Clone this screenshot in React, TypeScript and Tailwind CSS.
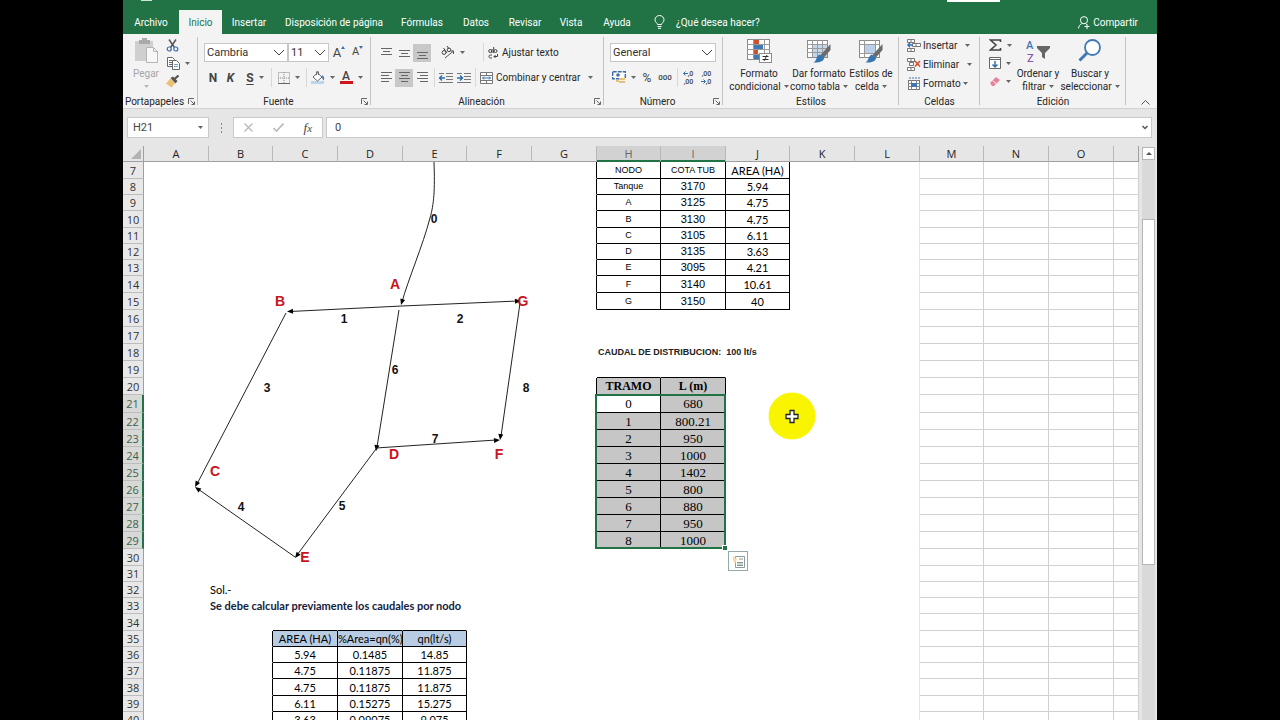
import type { ReactNode } from "react";
import clsx from "clsx";

const UI = "font-['Roboto','Noto_Sans',sans-serif]";

/* ---------- small shared pieces ---------- */

function Arrow() {
  return (
    <svg width="5" height="3" viewBox="0 0 5 3" className="shrink-0" aria-hidden="true">
      <path d="M0 0h5L2.5 3z" fill="#666" />
    </svg>
  );
}

function Chevron() {
  return (
    <svg width="12" height="8" viewBox="0 0 12 8" className="pointer-events-none absolute right-[2px] top-[5px]" aria-hidden="true">
      <path d="M1 1l5 5 5-5" fill="none" stroke="#444" strokeWidth="1" />
    </svg>
  );
}

function Tool({ label, width, active, children }: { label: string; width: string; active?: boolean; children: ReactNode }) {
  return (
    <button
      type="button"
      aria-label={label}
      className={clsx("flex h-[18px] shrink-0 items-center justify-center gap-[5px] text-[#444]", width, active && "bg-[#c8c8c8]")}
    >
      {children}
    </button>
  );
}

function Sep() {
  return <span className="h-[19px] w-px shrink-0 bg-[#d8d8d8]" />;
}

function Launcher() {
  return (
    <button type="button" aria-label="Más opciones" className="absolute bottom-[3px] right-[3px]">
      <svg width="7" height="7" viewBox="0 0 7 7" aria-hidden="true">
        <path d="M.5 6V.5H6M2.5 2.5l3.5 3.5M6.5 3.5v3h-3" fill="none" stroke="#666" />
      </svg>
    </button>
  );
}

function Group({ name, width, launcher, children }: { name: string; width: string; launcher?: boolean; children: ReactNode }) {
  return (
    <section aria-label={name} className={clsx("relative flex shrink-0 flex-col", width)}>
      <div className="flex-1">{children}</div>
      <div className={clsx("h-[13px] text-center text-[10px] leading-[13px] text-[#262626]", launcher && "pr-[12px]")}>{name}</div>
      {launcher && <Launcher />}
      <span className="absolute bottom-[3px] right-0 top-[3px] w-px bg-[#c3c3c3]" />
    </section>
  );
}

function Picker({ label, value, width }: { label: string; value: string; width: string }) {
  return (
    <div className={clsx("relative h-[19px] shrink-0 border border-[#c6c6c6] bg-white", width)}>
      <select aria-label={label} defaultValue={value} className="block h-full w-full appearance-none bg-transparent pl-[2px] text-[11px] leading-[17px] text-[#333] outline-none">
        <option>{value}</option>
      </select>
      <Chevron />
    </div>
  );
}

function BigButton({ width, lines, muted, arrowBelow, children }: { width: string; lines: string[]; muted?: boolean; arrowBelow?: boolean; children: ReactNode }) {
  return (
    <button type="button" className={clsx("flex shrink-0 flex-col items-center pt-[4px] text-[10px] leading-[13px]", width, muted ? "text-[#a6a6a6]" : "text-[#262626]")}>
      {children}
      {lines.map((line, i) => (
        <span key={line} className="flex items-center gap-[3px] whitespace-nowrap">
          {line}
          {!arrowBelow && i === lines.length - 1 && <Arrow />}
        </span>
      ))}
      {arrowBelow && (
        <span className="pt-[5px] opacity-40">
          <Arrow />
        </span>
      )}
    </button>
  );
}

/* ---------- icons ---------- */

function AlignIcon({ rows }: { rows: [number, number, number][] }) {
  return (
    <svg width="13" height="13" viewBox="0 0 13 13" aria-hidden="true">
      {rows.map(([x, y, w]) => (
        <path key={y} d={`M${x} ${y + 0.5}h${w}`} stroke="#666" />
      ))}
    </svg>
  );
}

function IndentIcon({ flip }: { flip?: boolean }) {
  return (
    <svg width="14" height="12" viewBox="0 0 14 12" aria-hidden="true">
      <path d="M0 1.5h5M7 1.5h7M7 4.5h7M7 7.5h7M0 10.5h14" stroke="#777" />
      <path d={flip ? "M0 6h5M3 3.5L5.6 6 3 8.5" : "M6 6H1M3 3.5L.4 6 3 8.5"} stroke="#2f6fad" strokeWidth="1.4" fill="none" />
    </svg>
  );
}

function GridBrush({ shade }: { shade: "table" | "cell" }) {
  return (
    <svg width="26" height="26" viewBox="0 0 26 26" className="mb-[3px]" aria-hidden="true">
      <rect x="1.5" y="2.5" width="20" height="17" fill="#fff" stroke="#8a8a8a" />
      {shade === "table" ? <rect x="6" y="7" width="15" height="12" fill="#c3d6ea" /> : <rect x="6" y="7" width="11" height="8" fill="#b9d0e8" />}
      <path d={shade === "table" ? "M1 6.5h21M1 10.5h21M1 14.5h21M6.5 2v18M11.5 2v18M16.5 2v18" : "M1 6.5h21M1 15.5h21M6.5 2v18M17.5 2v18"} stroke="#9a9a9a" />
      <path d="M24.5 6v6l-7 8-3-3z" fill="#6b6b6b" />
      <path d="M14 16.5l4 3.5c0 3-4 5-11 4.500 4-1 3-7 7-8z" fill="#3577b5" />
    </svg>
  );
}

function ConditionalIcon() {
  return (
    <svg width="26" height="26" viewBox="0 0 26 26" className="mb-[3px]" aria-hidden="true">
      <rect x="1.5" y="1.5" width="22" height="20" fill="#fff" stroke="#8a8a8a" />
      <rect x="8" y="2" width="5" height="4" fill="#d0502f" />
      <rect x="8" y="7" width="9" height="4" fill="#3f78b5" />
      <rect x="8" y="12" width="4" height="4" fill="#d0502f" />
      <rect x="8" y="17" width="5" height="4" fill="#3f78b5" />
      <path d="M1 6.5h23M1 11.5h23M1 16.5h23M7.5 1v21M18.5 1v21" stroke="#9a9a9a" />
      <rect x="13.5" y="15.5" width="12" height="9" fill="#fff" stroke="#8a8a8a" />
      <path d="M16.5 18.5h6M16.5 21.5h6M21 17l-3 6" stroke="#333" />
    </svg>
  );
}

function PasteIcon() {
  return (
    <svg width="26" height="26" viewBox="0 0 26 26" className="mb-[3px]" aria-hidden="true">
      <path d="M2 3h18v20H2z" fill="#cfcfcf" />
      <path d="M6 2h3V0h5v2h3v4H6z" fill="#a9a9a9" />
      <path d="M13.5 9.5h7l4 4v11h-11z" fill="#f7f7f7" stroke="#b5b5b5" />
      <path d="M20.5 9.5v4h4" fill="none" stroke="#b5b5b5" />
    </svg>
  );
}

function ScissorsIcon() {
  return (
    <svg width="13" height="13" viewBox="0 0 13 13" aria-hidden="true">
      <path d="M3 .5l5.500 8M10 .5l-5.500 8" stroke="#555" strokeWidth="1.5" />
      <circle cx="3.2" cy="10" r="2" fill="none" stroke="#3c6fa6" strokeWidth="1.2" />
      <circle cx="9.8" cy="10" r="2" fill="none" stroke="#3c6fa6" strokeWidth="1.2" />
    </svg>
  );
}

function CopyIcon() {
  return (
    <svg width="13" height="13" viewBox="0 0 13 13" aria-hidden="true">
      <path d="M.5.5h5l2 2v7h-7zM2 3.500h3M2 5.500h3M2 7.500h3" fill="#fff" stroke="#666" />
      <path d="M5.500 3.500h4l3 3v6h-7z" fill="#fff" stroke="#666" />
      <path d="M7 7.500h4M7 9.500h4" stroke="#7a98ba" />
    </svg>
  );
}

function BrushIcon() {
  return (
    <svg width="13" height="13" viewBox="0 0 13 13" aria-hidden="true">
      <path d="M4.500 3.500L9 8l-3.500 4.500L0 8.500z" fill="#ecc06f" />
      <path d="M4.500 3l2.500-1.500L11.500 6l-2 2.500z" fill="#555" />
      <path d="M8.500 4L12.500.5" stroke="#555" strokeWidth="2.200" />
    </svg>
  );
}

function CellsIcon({ kind }: { kind: "insert" | "delete" | "format" }) {
  return (
    <svg width="14" height="13" viewBox="0 0 14 13" className="shrink-0" aria-hidden="true">
      {kind === "format" ? (
        <>
          <rect x="1.5" y="3.5" width="11" height="9" fill="#fff" stroke="#777" />
          <path d="M1 6.500h12M1 9.500h12M4.500 3v10M9.500 3v10" stroke="#888" />
          <rect x="4" y="6" width="6" height="4" fill="#3f78b5" />
          <path d="M2 1h11" stroke="#3f78b5" strokeDasharray="2 1" />
        </>
      ) : (
        <>
          <path d="M.5.5h7v3h-7zM4 .5v3M.5 9.500h7v3h-7zM4 9.500v3" fill="#fff" stroke="#777" />
          <path d={kind === "insert" ? "M5.500 4.500h8v3h-8zM9 4.500v3" : "M2.500 4.500h4v3h-4z"} fill="#fff" stroke="#777" />
          {kind === "insert" ? (
            <path d="M6 6H1M3 3.800L.8 6 3 8.200" fill="none" stroke="#2f6fad" strokeWidth="1.300" />
          ) : (
            <path d="M8 3l5 5.500M13 3L8 8.500" stroke="#d9482b" strokeWidth="1.500" />
          )}
        </>
      )}
    </svg>
  );
}

/* ---------- header ---------- */

const tabs = [
  { name: "Archivo", width: "w-[56px]" },
  { name: "Inicio", width: "w-[43px]" },
  { name: "Insertar", width: "w-[54px]" },
  { name: "Disposición de página", width: "w-[116px]" },
  { name: "Fórmulas", width: "w-[60px]" },
  { name: "Datos", width: "w-[48px]" },
  { name: "Revisar", width: "w-[50px]" },
  { name: "Vista", width: "w-[42px]" },
  { name: "Ayuda", width: "w-[50px]" },
];

function Header() {
  return (
    <header className="shrink-0 bg-[#217346] text-white">
      <div className="flex h-[10px] items-start">
        <span className="ml-[18px] h-px w-[11px] bg-white/80" />
        <span className="ml-auto mr-[157px] h-[2px] w-[53px] bg-white" />
      </div>
      <div className="flex h-[24px] items-stretch text-[10px]">
        <nav className="flex" aria-label="Cinta">
          {tabs.map((t) => (
            <button
              key={t.name}
              type="button"
              className={clsx("whitespace-nowrap", t.width, t.name === "Inicio" ? "bg-[#f3f3f3] text-[#217346]" : "text-white")}
            >
              {t.name}
            </button>
          ))}
        </nav>
        <button type="button" className="ml-[12px] flex items-center gap-[11px] whitespace-nowrap">
          <svg width="11" height="14" viewBox="0 0 11 14" aria-hidden="true">
            <path d="M3.500 9.500C3.500 8 1 7.500 1 4.800a4.500 4.300 0 0 1 9 0c0 2.700-2.500 3.200-2.500 4.700zM3.500 11.500h4M4 13.300h3" fill="none" stroke="#fff" />
          </svg>
          ¿Qué desea hacer?
        </button>
        <button type="button" className="ml-auto mr-[19px] flex items-center gap-[3px]">
          <svg width="12" height="13" viewBox="0 0 12 13" aria-hidden="true">
            <circle cx="6" cy="4.2" r="3.6" fill="none" stroke="#fff" />
            <path d="M.6 12.500c0-2.500 1.400-4 3.200-4.800M7.500 7.500L8.500 8.500M9 8v5M6.500 10.500h5" fill="none" stroke="#fff" />
          </svg>
          Compartir
        </button>
      </div>
    </header>
  );
}

function Ribbon() {
  return (
    <div className="flex h-[75px] shrink-0 border-b border-[#d2d2d2] bg-[#f3f3f3]">
      <Group name="Portapapeles" width="w-[75px]" launcher>
        <div className="flex pl-[3px]">
          <BigButton width="w-[40px]" lines={["Pegar"]} muted arrowBelow>
            <PasteIcon />
          </BigButton>
          <div className="flex flex-col pt-[2px]">
            <Tool label="Cortar" width="w-[13px]"><ScissorsIcon /></Tool>
            <Tool label="Copiar" width="w-[24px]"><CopyIcon /><Arrow /></Tool>
            <Tool label="Copiar formato" width="w-[13px]"><BrushIcon /></Tool>
          </div>
        </div>
      </Group>

      <Group name="Fuente" width="w-[173px]" launcher>
        <div className="flex items-center pl-[6px] pt-[9px]">
          <Picker label="Fuente" value="Cambria" width="w-[84px]" />
          <Picker label="Tamaño de fuente" value="11" width="w-[41px]" />
          <Tool label="Aumentar tamaño" width="w-[20px]">
            <span className="flex items-start text-[13px]">A<svg width="4" height="3" viewBox="0 0 4 3" className="mt-[3px]"><path d="M0 3h4L2 0z" fill="#3f6ea5" /></svg></span>
          </Tool>
          <Tool label="Disminuir tamaño" width="w-[17px]">
            <span className="flex items-start text-[11px]">A<svg width="4" height="3" viewBox="0 0 4 3" className="mt-[2px]"><path d="M0 0h4L2 3z" fill="#3f6ea5" /></svg></span>
          </Tool>
        </div>
        <div className="flex items-center pl-[6px] pt-[6px] text-[12px]">
          <Tool label="Negrita" width="w-[18px]"><b>N</b></Tool>
          <Tool label="Cursiva" width="w-[17px]"><b className="italic">K</b></Tool>
          <Tool label="Subrayado" width="w-[32px]"><b className="underline underline-offset-2">S</b><Arrow /></Tool>
          <Sep />
          <Tool label="Bordes" width="w-[34px]">
            <svg width="12" height="12" viewBox="0 0 12 12" aria-hidden="true">
              <path d="M.5.5h11v11H.5zM6 0v12M0 6h12" fill="none" stroke="#888" strokeDasharray="1 1" />
              <path d="M0 11.500h12" stroke="#666" />
            </svg>
            <Arrow />
          </Tool>
          <Sep />
          <Tool label="Color de relleno" width="w-[31px]">
            <svg width="14" height="13" viewBox="0 0 14 13" aria-hidden="true">
              <path d="M0 10h13v3H0z" fill="#bcd6ec" />
              <path d="M2 6l4.500-4L11 6l-4.500 4z" fill="#fff" stroke="#666" />
              <path d="M5.500 4V.8h2V4" fill="none" stroke="#666" />
              <path d="M11.500 4c2 2 2 4 1 5.500-1-1.500-2-3.500-1-5.500z" fill="#3f6ea5" />
            </svg>
            <Arrow />
          </Tool>
          <Tool label="Color de fuente" width="w-[26px]">
            <span className="flex h-[13px] w-[13px] justify-center border-b-[3px] border-[#d0141c] text-[12px] font-medium leading-[10px]">A</span>
            <Arrow />
          </Tool>
        </div>
      </Group>

      <Group name="Alineación" width="w-[233px]" launcher>
        <div className="flex items-center pl-[6px] pt-[9px]">
          <Tool label="Alinear arriba" width="w-[18px]"><AlignIcon rows={[[1, 2, 11], [3, 5, 7], [1, 8, 11]]} /></Tool>
          <Tool label="Alinear en medio" width="w-[18px]"><AlignIcon rows={[[1, 4, 11], [3, 7, 7], [1, 10, 11]]} /></Tool>
          <Tool label="Alinear abajo" width="w-[18px]" active><AlignIcon rows={[[1, 6, 11], [3, 9, 7], [1, 12, 11]]} /></Tool>
          <Tool label="Orientación" width="w-[43px]">
            <svg width="14" height="13" viewBox="0 0 14 13" aria-hidden="true">
              <circle cx="3" cy="6.5" r="1.9" fill="none" stroke="#444" />
              <path d="M2.500 2l3.500 5" stroke="#444" />
              <circle cx="8" cy="3.8" r="1.8" fill="none" stroke="#444" />
              <path d="M6 0l2 3" stroke="#444" />
              <path d="M4 12l8.500-7M9.500 5h3v3" fill="none" stroke="#555" />
            </svg>
            <Arrow />
          </Tool>
          <span className="w-[9px]" />
          <Sep />
          <button type="button" className="flex items-center gap-[4px] whitespace-nowrap pl-[4px] text-[10px] text-[#262626]">
            <svg width="10" height="12" viewBox="0 0 10 12" aria-hidden="true">
              <circle cx="2.2" cy="4" r="1.5" fill="none" stroke="#444" />
              <path d="M4 2v4M5.700 0v6M4 8H2.500a1.500 1.500 0 0 0 0 3H4M9.500 7v2.500H6M7.500 8L6 9.500 7.500 11" fill="none" stroke="#444" />
              <circle cx="7.5" cy="4" r="1.5" fill="none" stroke="#444" />
            </svg>
            Ajustar texto
          </button>
        </div>
        <div className="flex items-center pl-[6px] pt-[6px]">
          <Tool label="Alinear a la izquierda" width="w-[18px]"><AlignIcon rows={[[1, 1, 11], [1, 4, 8], [1, 7, 11], [1, 10, 8]]} /></Tool>
          <Tool label="Centrar" width="w-[18px]" active><AlignIcon rows={[[1, 1, 11], [3, 4, 7], [1, 7, 11], [3, 10, 7]]} /></Tool>
          <Tool label="Alinear a la derecha" width="w-[18px]"><AlignIcon rows={[[1, 1, 11], [4, 4, 8], [1, 7, 11], [4, 10, 8]]} /></Tool>
          <span className="w-[3px]" />
          <Sep />
          <span className="w-[2px]" />
          <Tool label="Disminuir sangría" width="w-[18px]"><IndentIcon /></Tool>
          <Tool label="Aumentar sangría" width="w-[18px]"><IndentIcon flip /></Tool>
          <span className="w-[2px]" />
          <Sep />
          <button type="button" className="flex items-center gap-[3px] whitespace-nowrap pl-[4px] text-[10px] text-[#262626]">
            <svg width="13" height="12" viewBox="0 0 13 12" aria-hidden="true">
              <path d="M.5.5h12v11H.5zM.5 3.500h12M.5 8.500h12M6.500.5v3M6.500 8.500v3" fill="#fff" stroke="#777" />
              <path d="M2.500 6h8M4 4.500L2.500 6 4 7.500M9 4.500L10.500 6 9 7.500" fill="none" stroke="#2f6fad" />
            </svg>
            Combinar y centrar
            <span className="pl-[5px]"><Arrow /></span>
          </button>
        </div>
      </Group>

      <Group name="Número" width="w-[119px]" launcher>
        <div className="flex items-center pl-[6px] pt-[9px]">
          <Picker label="Formato de número" value="General" width="w-[106px]" />
        </div>
        <div className="flex items-center pl-[6px] pt-[6px]">
          <Tool label="Formato contable" width="w-[28px]">
            <svg width="14" height="13" viewBox="0 0 14 13" aria-hidden="true">
              <rect x=".7" y=".7" width="12.6" height="7" fill="#fff" stroke="#3f6ea5" strokeWidth="1.4" strokeDasharray="4 1" />
              <circle cx="6" cy="4" r="1.8" fill="#3f6ea5" />
              <path d="M7 7h6v2H7zM7 10h6v2H7zM4 9h3v2H4z" fill="#e6c277" />
            </svg>
            <Arrow />
          </Tool>
          <Tool label="Estilo porcentual" width="w-[18px]"><span className="text-[12px]">%</span></Tool>
          <Tool label="Estilo millares" width="w-[18px]"><span className="text-[8px] font-medium">000</span></Tool>
          <span className="w-[3px]" />
          <Sep />
          <Tool label="Aumentar decimales" width="w-[20px]">
            <span className="flex flex-col items-end text-[7px] font-medium leading-[8px]">
              <span className="flex items-center"><svg width="5" height="5" viewBox="0 0 5 5"><path d="M5 2.500H1M2.500.5L.5 2.500l2 2" fill="none" stroke="#2f6fad" /></svg>,0</span>
              <span>,00</span>
            </span>
          </Tool>
          <Tool label="Disminuir decimales" width="w-[16px]">
            <span className="flex flex-col items-end text-[7px] font-medium leading-[8px]">
              <span>,00</span>
              <span className="flex items-center"><svg width="5" height="5" viewBox="0 0 5 5"><path d="M0 2.500h4M2.500.5l2 2-2 2" fill="none" stroke="#2f6fad" /></svg>,0</span>
            </span>
          </Tool>
        </div>
      </Group>

      <Group name="Estilos" width="w-[176px]">
        <div className="flex pl-[6px]">
          <BigButton width="w-[60px]" lines={["Formato", "condicional"]}><ConditionalIcon /></BigButton>
          <BigButton width="w-[60px]" lines={["Dar formato", "como tabla"]}><GridBrush shade="table" /></BigButton>
          <BigButton width="w-[44px]" lines={["Estilos de", "celda"]}><GridBrush shade="cell" /></BigButton>
        </div>
      </Group>

      <Group name="Celdas" width="w-[81px]">
        <div className="flex flex-col pl-[8px] pt-[2px] text-[10px] text-[#262626]">
          <button type="button" className="flex h-[19px] items-center gap-[2px]"><CellsIcon kind="insert" />Insertar<span className="pl-[6px]"><Arrow /></span></button>
          <button type="button" className="flex h-[19px] items-center gap-[2px]"><CellsIcon kind="delete" />Eliminar<span className="pl-[6px]"><Arrow /></span></button>
          <button type="button" className="flex h-[19px] items-center gap-[2px]"><CellsIcon kind="format" />Formato<Arrow /></button>
        </div>
      </Group>

      <Group name="Edición" width="w-[146px]">
        <div className="flex pl-[6px]">
          <div className="flex w-[30px] flex-col pt-[2px]">
            <Tool label="Autosuma" width="w-[28px]">
              <svg width="13" height="12" viewBox="0 0 13 12" aria-hidden="true"><path d="M11.500 3V1h-10L7 6l-5.500 5h10V9" fill="none" stroke="#444" strokeWidth="1.600" /></svg>
              <Arrow />
            </Tool>
            <Tool label="Rellenar" width="w-[28px]">
              <svg width="12" height="12" viewBox="0 0 12 12" aria-hidden="true"><path d="M.5.5h11v11H.5zM.5 2.500h11" fill="#fff" stroke="#666" /><path d="M6 4v6M3.500 7.500L6 10l2.500-2.500" fill="none" stroke="#2f6fad" strokeWidth="1.500" /></svg>
              <Arrow />
            </Tool>
            <Tool label="Borrar" width="w-[28px]">
              <svg width="12" height="12" viewBox="0 0 12 12" aria-hidden="true"><path d="M1 8l6-6 4 3-6 6H3z" fill="#e5819a" /><path d="M3.500 5.500l4 3.500" stroke="#fff" /></svg>
              <Arrow />
            </Tool>
          </div>
          <BigButton width="w-[44px]" lines={["Ordenar y", "filtrar"]}>
            <svg width="26" height="26" viewBox="0 0 26 26" className="mb-[3px]" aria-hidden="true">
              <text x="1" y="11" fontSize="11" fontWeight="500" fill="#3f78b5">A</text>
              <text x="2" y="24" fontSize="11" fontWeight="500" fill="#8a55b0">Z</text>
              <path d="M12 8h13v2l-5 5v6l-3-2v-4l-5-5z" fill="#666" />
            </svg>
          </BigButton>
          <BigButton width="w-[60px]" lines={["Buscar y", "seleccionar"]}>
            <svg width="26" height="26" viewBox="0 0 26 26" className="mb-[3px]" aria-hidden="true">
              <circle cx="15.5" cy="9.5" r="7.5" fill="#fff" stroke="#3f78b5" strokeWidth="1.8" />
              <path d="M10 15l-7.500 7.500" stroke="#3f78b5" strokeWidth="3" />
            </svg>
          </BigButton>
        </div>
      </Group>
      <button type="button" aria-label="Contraer la cinta" className="ml-auto mr-[7px] mt-auto pb-[3px]">
        <svg width="9" height="5" viewBox="0 0 9 5" aria-hidden="true"><path d="M.5 4.500l4-4 4 4" fill="none" stroke="#555" /></svg>
      </button>
    </div>
  );
}

function FormulaBar() {
  return (
    <div className="flex shrink-0 items-center bg-[#e6e6e6] pl-[4px] pr-[5px] pt-[8px] text-[#444]">
      <div className="relative h-[21px] w-[82px] shrink-0 border border-[#c9c9c9] bg-white">
        <input aria-label="Cuadro de nombres" defaultValue="H21" className="block h-full w-full bg-transparent pl-[5px] text-[11px] outline-none" />
        <span className="absolute right-[5px] top-[8px]"><Arrow /></span>
      </div>
      <span className="flex w-[24px] shrink-0 flex-col items-center gap-[2px]">
        <i className="h-[2px] w-px bg-[#888]" /><i className="h-[2px] w-px bg-[#888]" /><i className="h-[2px] w-px bg-[#888]" />
      </span>
      <div className="flex h-[21px] w-[90px] shrink-0 items-center justify-around border border-[#c9c9c9] bg-white">
        <button type="button" aria-label="Cancelar"><svg width="9" height="9" viewBox="0 0 9 9"><path d="M.5.5l8 8M8.500.5l-8 8" stroke="#b8b8b8" strokeWidth="1.300" /></svg></button>
        <button type="button" aria-label="Introducir"><svg width="11" height="9" viewBox="0 0 11 9"><path d="M.5 5l3 3 7-7.500" fill="none" stroke="#b8b8b8" strokeWidth="1.600" /></svg></button>
        <button type="button" aria-label="Insertar función" className="font-['Liberation_Serif',serif] text-[13px] italic leading-[15px]">f<span className="text-[11px]">x</span></button>
      </div>
      <div className="relative ml-[3px] h-[21px] flex-1 border border-[#c9c9c9] bg-white">
        <input aria-label="Barra de fórmulas" defaultValue="0" className="block h-full w-full bg-transparent pl-[8px] text-[11px] outline-none" />
        <svg width="6" height="5" viewBox="0 0 6 5" className="absolute right-[3px] top-[7px]" aria-hidden="true"><path d="M.5 1L3 3.500 5.500 1" fill="none" stroke="#555" strokeWidth="1.500" /></svg>
      </div>
    </div>
  );
}

/* ---------- worksheet ---------- */

const columns = [
  { id: "A", w: "w-[65px]" },
  { id: "B", w: "w-[64px]" },
  { id: "C", w: "w-[65px]" },
  { id: "D", w: "w-[65px]" },
  { id: "E", w: "w-[64px]" },
  { id: "F", w: "w-[65px]" },
  { id: "G", w: "w-[65px]" },
  { id: "H", w: "w-[64px]" },
  { id: "I", w: "w-[65px]" },
  { id: "J", w: "w-[64px]" },
  { id: "K", w: "w-[65px]" },
  { id: "L", w: "w-[65px]" },
  { id: "M", w: "w-[64px]" },
  { id: "N", w: "w-[65px]" },
  { id: "O", w: "w-[65px]" },
  { id: "", w: "w-auto" },
];

const tallRows = new Set([7, 10, 14, 15, 16, 17, 18, 19, 20, 22, 23, 24, 25, 26, 27, 28, 29, 30, 34, 38]);
const rowNumbers = Array.from({ length: 34 }, (_, i) => i + 7);

const blocks = [
  { c0: 7, r0: 7, data: [["NODO", "COTA TUB", "AREA (HA)"], ["Tanque", "3170", "5.94"], ["A", "3125", "4.75"], ["B", "3130", "4.75"], ["C", "3105", "6.11"], ["D", "3135", "3.63"], ["E", "3095", "4.21"], ["F", "3140", "10.61"], ["G", "3150", "40"]] },
  { c0: 7, r0: 20, data: [["TRAMO", "L (m)"], ["0", "680"], ["1", "800.21"], ["2", "950"], ["3", "1000"], ["4", "1402"], ["5", "800"], ["6", "880"], ["7", "950"], ["8", "1000"]] },
  { c0: 2, r0: 35, data: [["AREA (HA)", "%Area=qn(%)", "qn(lt/s)"], ["5.94", "0.1485", "14.85"], ["4.75", "0.11875", "11.875"], ["4.75", "0.11875", "11.875"], ["6.11", "0.15275", "15.275"], ["3.63", "0.09075", "9.075"]] },
];

function blockAt(r: number, c: number) {
  return blocks.findIndex((b) => r >= b.r0 && r < b.r0 + b.data.length && c >= b.c0 && c < b.c0 + b.data[0].length);
}

function cellLook(block: number, r: number, c: number) {
  if (block === 0) {
    if (c === 9) return "font-['Lato',sans-serif] text-[11px]";
    if (c === 7 || r === 7) return "font-['Liberation_Sans',sans-serif] text-[9px]";
    return "font-['Liberation_Sans',sans-serif] text-[11px]";
  }
  if (block === 1) {
    if (r === 20) return "bg-[#c6c6c6] font-['Liberation_Serif',serif] text-[12px] font-bold";
    return clsx("font-['Liberation_Serif',serif] text-[13px]", !(r === 21 && c === 7) && "bg-[#c6c6c6]");
  }
  return clsx("font-['Lato',sans-serif] text-[11px]", r === 35 && "bg-[#b8cce4]");
}

const notes: Record<string, { span: number; text: string; look: string }> = {
  "18-7": { span: 3, text: "CAUDAL DE DISTRIBUCION:  100 lt/s", look: "font-['Liberation_Sans',sans-serif] text-[9px] font-bold text-[#222]" },
  "32-1": { span: 2, text: "Sol.-", look: "font-['Lato',sans-serif] text-[11px]" },
  "33-1": { span: 5, text: "Se debe calcular previamente los caudales por nodo", look: "font-['Lato',sans-serif] text-[11px] font-bold text-[#14213d]" },
};

function SheetRow({ r }: { r: number }) {
  const selected = r >= 21 && r <= 29;
  const cells: ReactNode[] = [];
  for (let c = 0; c < columns.length; c++) {
    const note = notes[`${r}-${c}`];
    const span = note ? note.span : 1;
    const last = c + span - 1;
    const own = blockAt(r, c);
    const grid = c >= 12;
    const blackRight = own >= 0 || blockAt(r, last + 1) >= 0;
    const blackBottom = own >= 0 || blockAt(r + 1, c) >= 0;
    const block = own >= 0 ? blocks[own] : null;
    cells.push(
      <td
        key={c}
        colSpan={span}
        className={clsx(
          "whitespace-pre border-b border-r p-0 leading-[15px]",
          blackRight ? "border-r-black" : grid ? "border-r-[#d0d0d0]" : c === 11 ? "border-r-[#e4e4e4]" : "border-r-transparent",
          blackBottom ? "border-b-black" : grid ? "border-b-[#d0d0d0]" : "border-b-transparent",
          own >= 0 && "text-center text-black",
          own >= 0 && cellLook(own, r, c),
          note && "pl-[1px]",
          note && note.look,
        )}
      >
        {block ? block.data[r - block.r0][c - block.c0] : note ? note.text : null}
      </td>,
    );
    c = last;
  }
  return (
    <tr className={r === 21 ? "h-[18px]" : tallRows.has(r) ? "h-[17px]" : "h-[16px]"}>
      <th
        scope="row"
        className={clsx(
          "border-b border-b-[#bdbdbd] p-0 text-center font-['Open_Sans',sans-serif] text-[11px] font-normal leading-[15px]",
          selected ? "border-r-2 border-r-[#217346] bg-[#d6d9d6] text-[#3f5f4c]" : "border-r border-r-[#9f9f9f] bg-[#e8e8e8] text-[#333]",
        )}
      >
        {r}
      </th>
      {cells}
    </tr>
  );
}

type Edge = { d: string; head: [number, number, number] };

const edges: Edge[] = [
  { d: "M434 162C435 190 434 204 430 218C423 245 408 280 402 302", head: [401, 305, 107] },
  { d: "M402 306L290 311.500", head: [287, 311.5, 177] },
  { d: "M402 306L518 301", head: [521, 301, -2.5] },
  { d: "M286 313L197 484", head: [195, 487, 118] },
  { d: "M295 557L198 489", head: [195, 487, 215] },
  { d: "M376 449L297 555", head: [295, 558, 127] },
  { d: "M399 310L377 447", head: [376, 451, 99] },
  { d: "M376 448L496 440", head: [500, 440, -4] },
  { d: "M520 303L501 436", head: [500, 440, 98] },
];

const marks: { t: string; x: number; y: number; node?: boolean }[] = [
  { t: "A", x: 395, y: 289, node: true },
  { t: "B", x: 280, y: 306, node: true },
  { t: "G", x: 523, y: 306, node: true },
  { t: "C", x: 215, y: 476, node: true },
  { t: "D", x: 394, y: 459, node: true },
  { t: "F", x: 499, y: 459, node: true },
  { t: "E", x: 305, y: 562, node: true },
  { t: "0", x: 434, y: 223 },
  { t: "1", x: 344, y: 323 },
  { t: "2", x: 460, y: 323 },
  { t: "3", x: 267, y: 392 },
  { t: "4", x: 241, y: 511 },
  { t: "5", x: 342, y: 510 },
  { t: "6", x: 395, y: 374 },
  { t: "7", x: 435, y: 443 },
  { t: "8", x: 526, y: 392 },
];

function Network() {
  return (
    <svg width="400" height="410" viewBox="144 162 400 410" className="pointer-events-none absolute left-[21px] top-[24px] font-['Liberation_Sans',sans-serif]" role="img" aria-label="Red de distribución">
      {edges.map((e) => (
        <g key={e.d}>
          <path d={e.d} fill="none" stroke="#222" strokeWidth="1" />
          <path d="M0 0L-6 -2.500V2.500z" fill="#000" transform={`translate(${e.head[0]} ${e.head[1]}) rotate(${e.head[2]})`} />
        </g>
      ))}
      {marks.map((m) => (
        <text key={m.t} x={m.x} y={m.y} textAnchor="middle" fontWeight="700" fontSize={m.node ? 14 : 12} fill={m.node ? "#c8141c" : "#111"}>
          {m.t}
        </text>
      ))}
    </svg>
  );
}

function Sheet() {
  return (
    <div className="relative min-w-0 flex-1 overflow-hidden bg-white">
      <table className="w-full table-fixed border-separate border-spacing-0">
        <colgroup>
          <col className="w-[21px]" />
          {columns.map((c) => (
            <col key={c.id} className={c.w} />
          ))}
        </colgroup>
        <thead>
          <tr className="h-[8px] bg-[#e6e6e6]">
            <td colSpan={columns.length + 1} className="p-0" />
          </tr>
          <tr className="h-[16px] bg-[#e6e6e6]">
            <th className="border-b border-r border-[#9f9f9f] p-0" aria-label="Seleccionar todo">
              <svg width="10" height="10" viewBox="0 0 10 10" className="ml-auto mr-[2px]" aria-hidden="true"><path d="M10 0v10H0z" fill="#b3b3b3" /></svg>
            </th>
            {columns.map((c) => {
              const on = c.id === "H" || c.id === "I";
              return (
                <th
                  key={c.id}
                  scope="col"
                  className={clsx(
                    "border-b border-r p-0 text-center font-['Open_Sans',sans-serif] text-[11px] font-normal leading-[15px]",
                    on ? "border-b-[#217346] bg-[#d2d2d2] text-[#666] shadow-[inset_0_-1px_0_#217346]" : "border-b-[#9f9f9f] text-[#222]",
                    c.id === "" ? "border-r-[#9f9f9f]" : "border-r-[#b9b9b9]",
                  )}
                >
                  {c.id}
                </th>
              );
            })}
          </tr>
        </thead>
        <tbody>
          {rowNumbers.map((r) => (
            <SheetRow key={r} r={r} />
          ))}
        </tbody>
      </table>

      <Network />

      <div className="pointer-events-none absolute left-[472px] top-[256px] h-[155px] w-[131px] border-2 border-[#217346]">
        <span className="absolute -bottom-[3px] -right-[3px] h-[5px] w-[5px] border-l border-t border-white bg-[#217346]" />
      </div>
      <button type="button" aria-label="Análisis rápido" className="absolute left-[605px] top-[413px] flex h-[20px] w-[20px] items-center justify-center border border-[#93a8a8] bg-white">
        <svg width="13" height="13" viewBox="0 0 13 13" aria-hidden="true">
          <path d="M3.500 1.500h9v11h-9z" fill="#fff" stroke="#8c9a9a" />
          <path d="M7 4h4M5 7.500h6M5 10.500h6" stroke="#8f8f8f" />
          <path d="M5 9h6" stroke="#7fb89a" />
          <path d="M1 1l4 3-2 5-2-4z" fill="#f4d9a3" />
        </svg>
      </button>
      <svg width="48" height="48" viewBox="0 0 48 48" className="pointer-events-none absolute left-[645px] top-[254px]" aria-hidden="true">
        <circle cx="24" cy="24" r="23.5" fill="#f9f500" />
        <path d="M22 18.500h4v4h4v4h-4v4h-4v-4h-4v-4h4z" fill="#fff" stroke="#222" strokeWidth="1.300" />
      </svg>
    </div>
  );
}

function ScrollBar() {
  return (
    <div className="flex w-[18px] shrink-0 flex-col bg-[#e6e6e6] pl-[3px] pr-[2px] pt-[9px]">
      <button type="button" aria-label="Subir" className="flex h-[13px] shrink-0 items-center justify-center border border-[#b5b5b5] bg-white">
        <svg width="6" height="3" viewBox="0 0 6 3" aria-hidden="true"><path d="M0 3h6L3 0z" fill="#555" /></svg>
      </button>
      <div className="flex flex-1 flex-col bg-[#d9d9d9] pt-[59px]">
        <div className="h-[69%] border border-[#b5b5b5] bg-white" />
      </div>
    </div>
  );
}

export default function App() {
  return (
    <div className={clsx("flex h-screen flex-col overflow-hidden bg-black px-[123px]", UI)}>
      <Header />
      <Ribbon />
      <FormulaBar />
      <main className="flex min-h-0 flex-1">
        <Sheet />
        <ScrollBar />
      </main>
    </div>
  );
}
